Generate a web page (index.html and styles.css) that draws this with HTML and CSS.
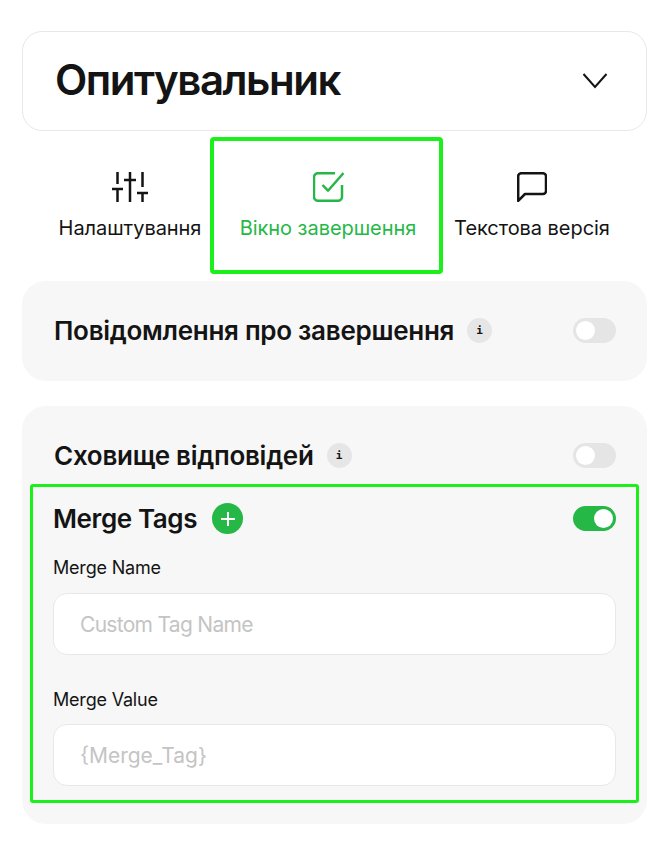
FILE: index.html
```html
<!DOCTYPE html>
<html lang="uk">
<head>
  <meta charset="utf-8" />
  <title>Опитувальник</title>
  <link rel="stylesheet" href="styles.css">
</head>
<body>
  <div class="page">
    <div class="header-card">
      <h1>Опитувальник</h1>
      <svg class="chevron" width="26" height="16" viewBox="0 0 26 16"><path d="M1.500 1 13 14 24.500 1"/></svg>
    </div>

    <div class="tabs">
      <div class="tab tab-first">
        <svg width="37" height="30" viewBox="0 0 37 30"><path d="M5.500 0v12M0 17h11M5.500 17v13M18 0v30M12 8h12M30.500 0v15M25 21h11M30.500 21v9"/></svg>
        <span>Налаштування</span>
      </div>
      <div class="tab tab-active">
        <svg width="31" height="30" viewBox="0 0 31 30"><path d="M22 1.200H5a4 4 0 0 0-4 4v19.600a4 4 0 0 0 4 4h20a4 4 0 0 0 4-4V13M9.500 13l5.500 5.700L30.500 1"/></svg>
        <span>Вікно завершення</span>
      </div>
      <div class="tab tab-last">
        <svg width="30" height="30" viewBox="0 0 30 30"><path d="M1.200 28.800V4.200a3 3 0 0 1 3-3H26a3 3 0 0 1 3 3V19a3 3 0 0 1-3 3H8z"/></svg>
        <span>Текстова версія</span>
      </div>
    </div>

    <section class="panel panel-short">
      <div class="row">
        <div class="row-title">
          <h2>Повідомлення про завершення</h2>
          <span class="info">i</span>
        </div>
        <span class="toggle"></span>
      </div>
    </section>

    <section class="panel panel-tall">
      <div class="row">
        <div class="row-title">
          <h2>Сховище відповідей</h2>
          <span class="info">i</span>
        </div>
        <span class="toggle"></span>
      </div>

      <div class="merge-box">
        <div class="row merge-head">
          <div class="row-title merge-title">
            <h2>Merge Tags</h2>
            <span class="add-btn">
              <svg width="16" height="16" viewBox="0 0 16 16"><path d="M8 1v14M1 8h14"/></svg>
            </span>
          </div>
          <span class="toggle on"></span>
        </div>
        <label class="field-label first">Merge Name</label>
        <input class="field field-name" type="text" placeholder="Custom Tag Name">
        <label class="field-label">Merge Value</label>
        <input class="field" type="text" placeholder="{Merge_Tag}">
      </div>
    </section>
  </div>
</body>
</html>
```

FILE: styles.css
```css
* {
  box-sizing: border-box;
}
body {
  margin: 0;
  background: #fff;
  font-family: Inter, "Noto Sans", sans-serif;
  color: #141414;
}
.page {
  padding: 31px 23px 0 22px;
}
h1, h2 {
  margin: 0;
}
.header-card {
  height: 100px;
  border: 1px solid #e8e8e8;
  border-radius: 20px;
  padding: 0 38px 0 32px;
  display: flex;
  align-items: center;
  justify-content: space-between;
}
.header-card h1 {
  font-size: 42px;
  font-weight: 600;
  letter-spacing: -1.45px;
  margin-bottom: 4px;
}
.chevron path {
  fill: none;
  stroke: #141414;
  stroke-width: 2;
}
.tabs {
  display: flex;
  margin: 6px 0 7px 28px;
}
.tab {
  height: 137px;
  display: flex;
  flex-direction: column;
  align-items: center;
  padding-top: 35px;
  font-size: 20px;
  line-height: 24px;
  letter-spacing: -0.05px;
  white-space: nowrap;
}
.tab svg {
  margin-bottom: 14px;
}
.tab svg path {
  fill: none;
  stroke: currentColor;
  stroke-width: 2.5;
  stroke-linejoin: round;
}
.tab-first {
  width: 160px;
}
.tab-last {
  width: 178px;
}
.tab-active {
  width: 233px;
  color: #25b847;
  border: 4px solid #1bf01b;
  border-radius: 4px;
  padding: 31px 0 0 3px;
}
.panel {
  background: #f7f7f7;
  border-radius: 24px;
}
.panel-short {
  height: 100px;
  padding: 37px 31px 0 32px;
  margin-bottom: 25px;
}
.panel-tall {
  height: 418px;
  padding: 37px 31px 0 32px;
}
.row {
  height: 25px;
  display: flex;
  align-items: center;
  justify-content: space-between;
}
.row-title {
  display: flex;
  align-items: center;
  gap: 13px;
}
.row-title h2 {
  font-size: 26px;
  font-weight: 600;
  letter-spacing: -0.28px;
  white-space: nowrap;
}
.info {
  width: 25px;
  height: 25px;
  border-radius: 50%;
  background: #e6e6e6;
  display: flex;
  align-items: center;
  justify-content: center;
  font-family: "DejaVu Sans Mono", monospace;
  font-size: 11px;
  font-weight: 700;
}
.toggle {
  width: 43px;
  height: 25px;
  border-radius: 13px;
  background: #e5e5e5;
  display: flex;
  align-items: center;
  padding: 0 3px;
}
.toggle::after {
  content: "";
  width: 19px;
  height: 19px;
  border-radius: 50%;
  background: #fff;
}
.toggle.on {
  background: #25b847;
  justify-content: flex-end;
}
.merge-box {
  margin: 16px -23px 0 -24px;
  height: 319px;
  border: 3px solid #1bf01b;
  border-radius: 3px;
  padding: 16px 20px 0;
}
.merge-head {
  height: 31px;
}
.merge-title {
  gap: 15px;
}
.merge-title h2 {
  letter-spacing: -0.4px;
}
.add-btn {
  width: 31px;
  height: 31px;
  border-radius: 50%;
  background: #25b847;
  display: flex;
  align-items: center;
  justify-content: center;
}
.add-btn path {
  stroke: #fff;
  stroke-width: 2;
}
.field-label {
  display: block;
  font-size: 18px;
  line-height: 24px;
  letter-spacing: -0.2px;
  margin: 33px 0 12px;
}
.field-label.first {
  margin: 22px 0 13px;
}
.field {
  display: block;
  width: 100%;
  height: 62px;
  border: 1px solid #e8e8e8;
  border-radius: 14px;
  background: #fff;
  padding: 0 26px;
  font-family: Inter, "Noto Sans", sans-serif;
  font-size: 21px;
}
.field-name {
  letter-spacing: -0.7px;
}
.field::placeholder {
  color: #c4c4c4;
}
```
